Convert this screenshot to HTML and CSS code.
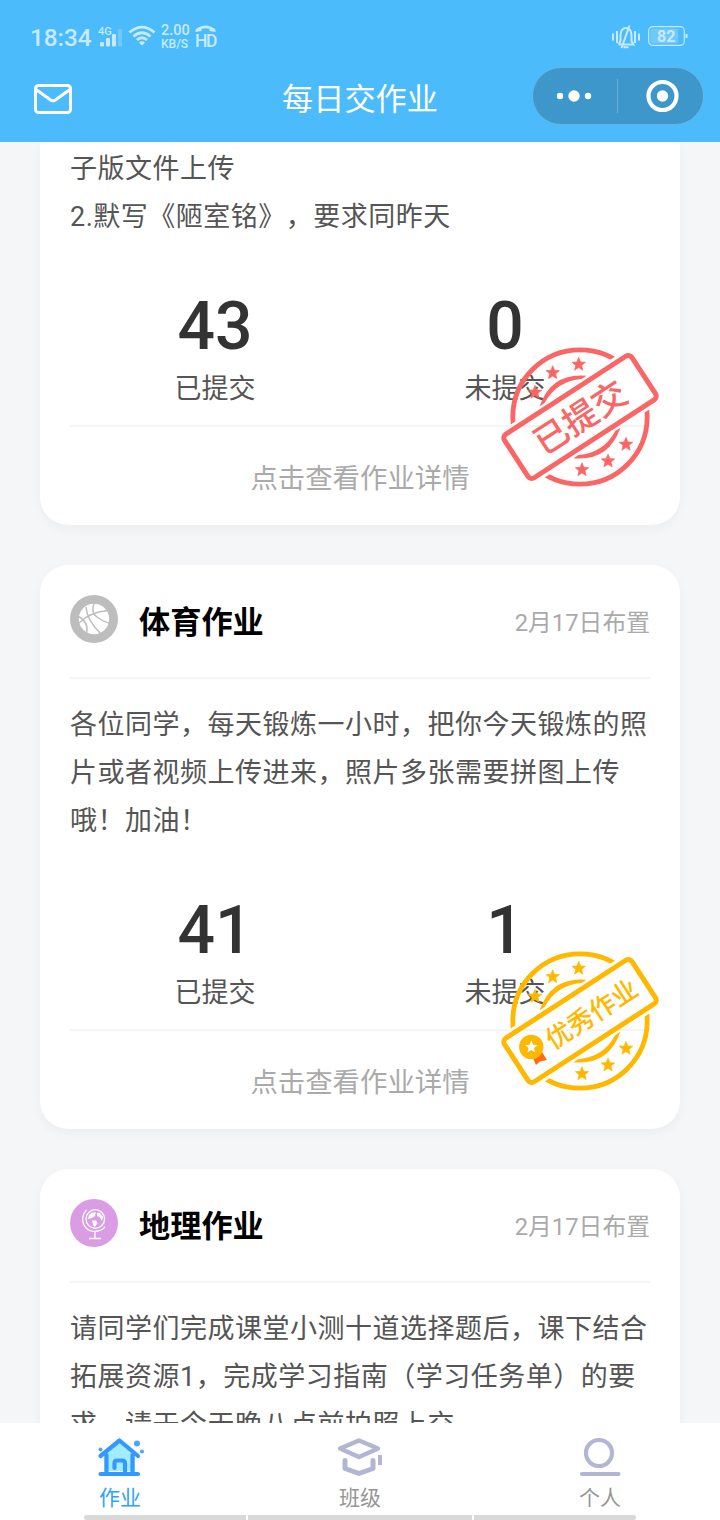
FILE: index.html
```html
<!DOCTYPE html>
<html lang="zh-CN">
<head>
<meta charset="utf-8">
<title>每日交作业</title>
<link rel="stylesheet" href="styles.css">
</head>
<body>
<svg class="defs" width="0" height="0" aria-hidden="true">
  <defs>
    <path id="star" d="M0-7 1.9-2.4 6.8-2.1 3 1.1 4.2 6 0 3.3-4.2 6-3 1.1-6.8-2.1-1.9-2.4Z"/>
    <clipPath id="rings"><path transform="rotate(-33)" d="M-90-90H90V-31.5H-90ZM-90 31.5H90V90H-90Z"/></clipPath>
    <g id="stamp">
      <g clip-path="url(#rings)" fill="none" stroke="currentColor">
        <circle r="67.200" stroke-width="4.800"/>
      </g>
      <g transform="rotate(-33)" fill="currentColor">
        <path d="M-28-31Q0-53 28-31L22-31Q0-43-22-31ZM-28 31Q0 53 28 31L22 31Q0 43-22 31Z"/>
        <rect x="-76" y="-26" width="152" height="52" rx="4.500" fill="none" stroke="currentColor" stroke-width="5"/>
      </g>
      <g fill="currentColor" stroke="currentColor" stroke-width=".6">
        <use href="#star" x="-45" y="-24.700"/><use href="#star" x="-27.300" y="-44.300"/><use href="#star" x="-1.300" y="-52.700"/>
        <use href="#star" x="2" y="52.700"/><use href="#star" x="28" y="44"/><use href="#star" x="46" y="27.300"/>
      </g>
    </g>
  </defs>
</svg>
<div class="screen">
  <header class="top">
    <div class="status">
      <span class="time">18:34</span>
      <svg class="signal" width="26" height="24" viewBox="0 0 26 24"><text x="0" y="10" font-size="11" font-weight="500" fill="currentColor">4G</text><g fill="currentColor"><rect x="2" y="17" width="4" height="4.500" rx="1"/><rect x="8" y="13" width="4" height="8.500" rx="1"/><rect x="14" y="9" width="4" height="12.500" rx="1"/><rect x="20" y="4" width="4" height="17.500" rx="1" opacity=".3"/></g></svg>
      <svg class="wifi" width="28" height="22" viewBox="0 0 28 22" fill="none" stroke="currentColor" stroke-width="2.800"><path d="M1.500 7.500Q14-3.300 26.500 7.500M5.500 11.500Q14 4 22.500 11.500M9 15Q14 10.500 19 15"/><path d="M11 17.500Q14 15 17 17.500L14 20.500Z" fill="currentColor" stroke="none"/></svg>
      <span class="rate"><b>2.00</b><i>KB/S</i></span>
      <span class="hd"><svg width="21" height="8" viewBox="0 0 21 8"><path d="M.5 7V4.500Q10.500-3.500 20.500 4.500V7L14.500 6V4Q10.500 2.500 6.500 4V6Z" fill="currentColor"/></svg><b>HD</b></span>
      <span class="fill"></span>
      <svg class="mute" width="30" height="26" viewBox="0 0 30 26" fill="none" stroke="currentColor" stroke-width="2"><path d="M2 9.500v7M6 7v12M24 7v12M28 9.500v7"/><path d="M7.500 20.500H22.500L20.500 17V11Q20 4 15 4T9.500 11V17L7.500 20.500" stroke-width="2"/><path d="M18.500 1.500 10.500 24M12.500 23.200h5" stroke-width="2"/></svg>
      <svg class="battery" width="40" height="20" viewBox="0 0 40 20"><rect x=".7" y=".7" width="35.600" height="18.600" rx="4" fill="none" stroke="currentColor" stroke-width="1.200"/><rect x="2.500" y="2.500" width="27.500" height="15" rx="2" fill="currentColor" opacity=".3"/><path d="M37.500 8h2v4h-2z" fill="currentColor"/><text x="18.300" y="15.800" text-anchor="middle" font-size="16" font-weight="700" fill="currentColor">82</text></svg>
    </div>
    <div class="nav">
      <svg class="mail" width="40" height="32" viewBox="0 0 40 32" fill="none" stroke="#fff" stroke-width="3"><rect x="2.500" y="2.500" width="35" height="27" rx="3"/><path d="M3 6.500 18 17.200Q20 18.500 22 17.200L37 6.500" stroke-linecap="round"/></svg>
      <h1>每日交作业</h1>
      <div class="capsule">
        <svg width="84" height="56" viewBox="0 0 84 56" fill="#fff"><circle cx="27" cy="28" r="3.200"/><circle cx="41" cy="28" r="5.700"/><circle cx="55" cy="28" r="3.200"/></svg>
        <span class="split"></span>
        <svg width="84" height="56" viewBox="0 0 84 56"><circle cx="44.500" cy="28" r="14" fill="none" stroke="#fff" stroke-width="4.200"/><circle cx="44.500" cy="28" r="5.700" fill="#fff"/></svg>
      </div>
    </div>
  </header>

  <main class="feed">
    <article class="card card-scrolled">
      <p class="desc">子版文件上传<br>2.默写《陋室铭》，要求同昨天</p>
      <div class="stats">
        <div class="stat"><strong>43</strong><span>已提交</span></div>
        <div class="stat"><strong>0</strong><span>未提交</span></div>
      </div>
      <div class="more">点击查看作业详情</div>
      <svg class="stamp stamp-red" viewBox="-80 -74 160 148"><use href="#stamp"/><text transform="rotate(-33)" x="0" y="13" text-anchor="middle" font-size="34.500" font-weight="500" fill="currentColor">已提交</text></svg>
    </article>

    <article class="card">
      <div class="head">
        <svg class="subject" viewBox="0 0 48 48"><circle cx="24" cy="24" r="24" fill="#bdbdbd"/><circle cx="24" cy="24" r="15.200" fill="#fff"/><path d="M24.500 8Q20 17 27 22T39.500 28M9 28Q20 17 38.500 15.500M16 12Q17 25 30 38M8.500 21.500Q19 27 16.500 38" fill="none" stroke="#bdbdbd" stroke-width="1.500"/></svg>
        <h2>体育作业</h2><time>2月17日布置</time>
      </div>
      <p class="desc">各位同学，每天锻炼一小时，把你今天锻炼的照<br>片或者视频上传进来，照片多张需要拼图上传<br>哦！加油！</p>
      <div class="stats">
        <div class="stat"><strong>41</strong><span>已提交</span></div>
        <div class="stat"><strong>1</strong><span>未提交</span></div>
      </div>
      <div class="more">点击查看作业详情</div>
      <svg class="stamp stamp-gold" viewBox="-80 -74 160 148"><use href="#stamp"/><path d="M-48 35-44 44-40 40.500-33 39-38 31Z" fill="#ff6a13"/><circle cx="-48.700" cy="26" r="12.200" fill="currentColor"/><use href="#star" transform="translate(-48.700 26) scale(.92)" fill="#fff"/><text transform="rotate(-33)" x="13.500" y="10" text-anchor="middle" font-size="26" font-weight="500" fill="currentColor">优秀作业</text></svg>
    </article>

    <article class="card">
      <div class="head">
        <svg class="subject" viewBox="0 0 48 48"><circle cx="24" cy="24" r="24" fill="#da9de5"/><g fill="none" stroke="#fff" stroke-width="1.300"><circle cx="25.300" cy="20" r="9.300"/><path d="M16.500 11Q10 18 14 26T28 32Q33 31 35 27.500M25 32.500V39M19 39.500H31"/></g><path d="M18 20 19 16 22 13.500 26 13.500 25 17 22 19ZM27 13.500 30 14 33 18 32 22 29.500 18 27 17ZM22 21.500 26 21.500 27.500 24 25 28 23.500 27Z" fill="#fff"/></svg>
        <h2>地理作业</h2><time>2月17日布置</time>
      </div>
      <p class="desc">请同学们完成课堂小测十道选择题后，课下结合<br>拓展资源1，完成学习指南（学习任务单）的要<br>求，请于今天晚八点前拍照上交</p>
    </article>
  </main>

  <nav class="tabs">
    <a class="tab active">
      <svg width="48" height="40" viewBox="0 0 48 40"><path d="M8 19 23.500 4 39 19V34H8Z" fill="#a3ecff"/><g fill="none" stroke="#3399ff" stroke-width="4.200" stroke-linecap="round" stroke-linejoin="round"><path d="M4.500 19 23.500 3.500 42 19M10.500 18V36M36.500 18V36M4.500 37H42"/><path d="M18.500 31V26.500Q18.500 23.500 21 23.500H26Q29 23.500 29 26.500V35"/></g><g fill="#4aa5ff"><circle cx="41" cy="6.500" r="3"/><circle cx="4.500" cy="12.500" r="2"/><circle cx="46" cy="14.500" r="2"/></g></svg>
      <span>作业</span>
    </a>
    <a class="tab">
      <svg width="48" height="40" viewBox="0 0 48 40" fill="none" stroke="#b3b6d2" stroke-width="4.400" stroke-linejoin="round"><path d="M4 11.500 23 3.500 42 11.500 23 20Z"/><path d="M9 23.500V31.500L23 36.500 37 31.500V23.500" stroke-width="5" stroke-linecap="round"/><path d="M44 18V28" stroke-width="4"/></svg>
      <span>班级</span>
    </a>
    <a class="tab">
      <svg width="48" height="40" viewBox="0 0 48 40" fill="none" stroke="#b3b6d2" stroke-width="4.200"><circle cx="23" cy="16" r="13"/><path d="M6 37H42.500" stroke-linecap="round"/></svg>
      <span>个人</span>
    </a>
  </nav>
  <div class="gesture"><i></i><i class="mid"></i><i></i></div>
</div>
</body>
</html>
```
FILE: styles.css
```css
* { box-sizing: border-box; margin: 0; padding: 0; }
body {
  font-family: Roboto, "Noto Sans CJK SC", sans-serif;
  background: #f5f6f8;
  color: #555;
  text-spacing-trim: space-all;
}
.defs { display: block; position: absolute; }
svg { display: block; flex: none; }
.screen { display: flex; flex-direction: column; width: 720px; height: 1520px; overflow: hidden; }

.top { flex: none; height: 142px; background: #4bbbfb; color: #fff; }
.status { display: flex; height: 67px; padding: 24px 32px 0 30px; color: #c7eafe; }
.status .fill { flex: 1; }
.time { width: 68px; font-size: 24.3px; font-weight: 500; line-height: 28px; }
.signal { margin: 1px 4px 0 0; }
.wifi { margin: 1px 5px 0 0; }
.rate { width: 34px; display: flex; flex-direction: column; white-space: nowrap; }
.rate b { font-size: 14.5px; line-height: 14px; font-weight: 500; }
.rate i { font-size: 12px; line-height: 12px; font-style: normal; font-weight: 500; }
.hd { display: flex; flex-direction: column; width: 24px; padding-top: 1px; }
.hd b { font-size: 17.500px; line-height: 17px; font-weight: 500; letter-spacing: -1.500px; }
.mute { margin-right: 7px; }
.battery { margin-top: 2px; }
.nav { display: flex; height: 58px; padding: 0 16px 0 33px; }
.nav h1 { margin-left: 209px; font-size: 31.2px; line-height: 65px; font-weight: 400; }
.mail { margin-top: 16px; }
.capsule {
  display: flex; align-items: center; margin-left: auto;
  width: 172px; height: 58px; border: 1px solid #67b5df; border-radius: 29px;
  background: #3d97ca;
}
.split { width: 1px; height: 34px; background: #68b1da; }

.feed { flex: 1; min-height: 0; display: flex; flex-direction: column; gap: 40px; padding: 0 40px; overflow: hidden; }
.card {
  position: relative; flex: none; padding: 0 30px;
  border-radius: 28px; background: #fff;
  box-shadow: 0 4px 12px rgba(0, 0, 0, .04);
}
.card-scrolled { padding-top: 3px; border-top-left-radius: 0; border-top-right-radius: 0; }
.card-scrolled .desc { padding-top: 0; }
.head { display: flex; height: 114px; padding-top: 30px; border-bottom: 2px solid #f5f5f5; }
.subject { width: 48px; height: 48px; }
.head h2 { margin-left: 21px; font-size: 31.2px; line-height: 56px; font-weight: 700; color: #000; }
.head time { margin-left: auto; font-size: 23.8px; line-height: 57px; color: #aaa; }
.desc { padding-top: 22px; font-size: 27px; line-height: 48px; letter-spacing: .5px; white-space: nowrap; }
.stats { display: flex; height: 186px; border-bottom: 2px solid #f5f5f5; }
.stat { flex: 1; display: flex; flex-direction: column; align-items: center; padding-top: 46px; }
.stat strong { font-size: 66px; line-height: 80px; font-weight: 500; color: #333; }
.stat span { font-size: 27px; line-height: 44px; }
.more { height: 98px; font-size: 27.4px; line-height: 104px; text-align: center; color: #aaa; }
.stamp { position: absolute; right: 20px; bottom: 34px; width: 160px; height: 148px; }
.stamp-red { color: #fa6565; }
.stamp-gold { color: #ffb800; }

.tabs { flex: none; display: flex; height: 92px; padding-top: 14px; background: #fff; }
.tab { flex: 1; display: flex; flex-direction: column; align-items: center; font-size: 21px; color: #969696; }
.tab span { line-height: 42px; }
.tab.active { color: #2fa3f7; }
.gesture { flex: none; display: flex; gap: 2px; height: 5px; padding: 0 84px; background: #fff; }
.gesture i { flex: 1; background: #d9d9d9; }
.gesture .mid { flex: none; width: 224px; }
.gesture i:first-child { border-radius: 3px 0 0 3px; }
.gesture i:last-child { border-radius: 0 3px 3px 0; }
```
